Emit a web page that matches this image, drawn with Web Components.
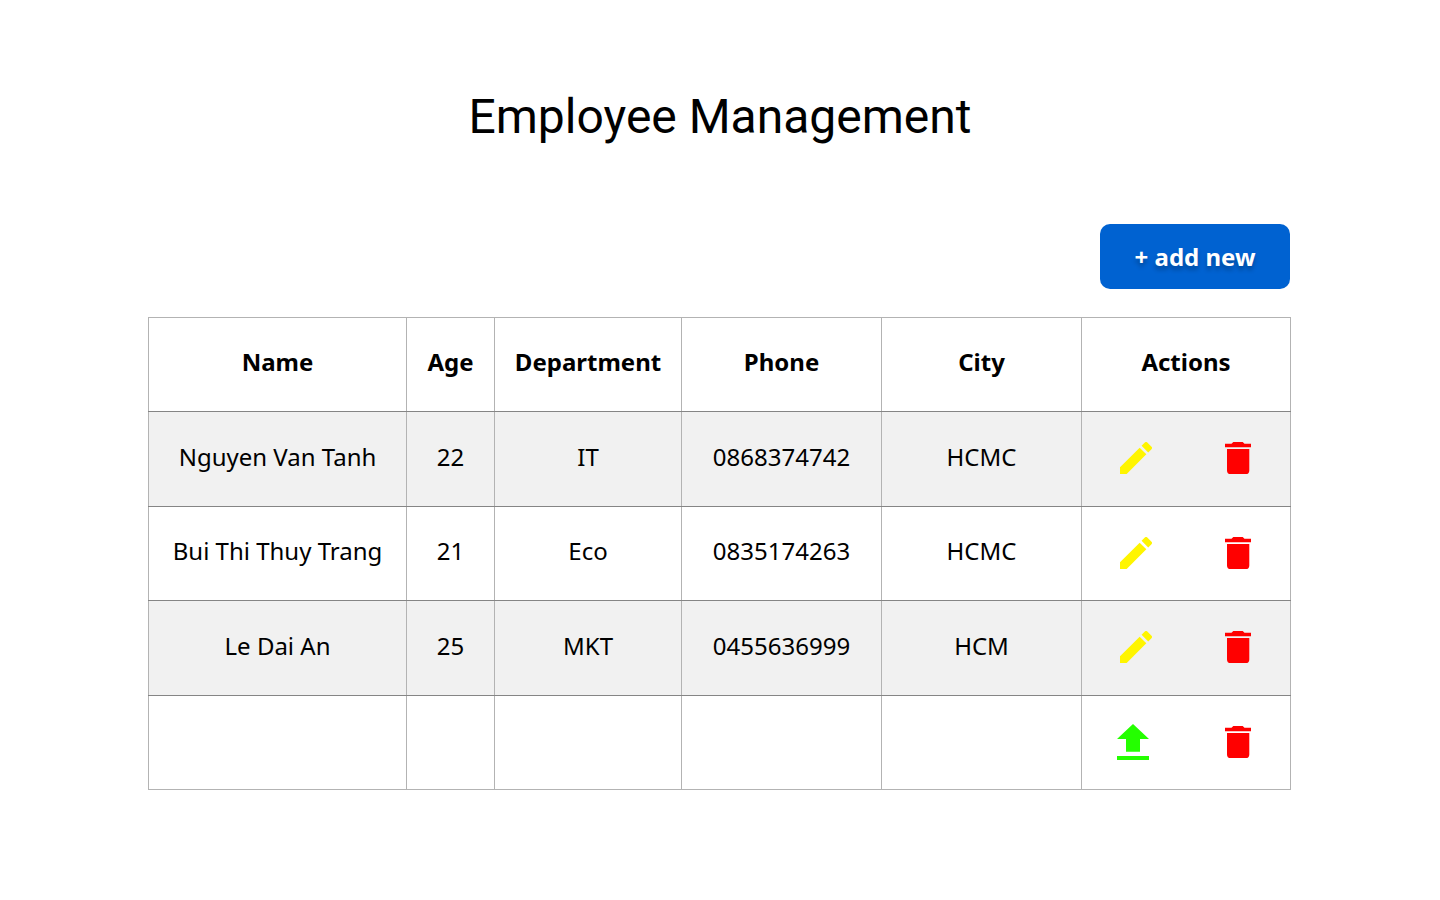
<!DOCTYPE html>
<html lang="en">
<head>
<meta charset="utf-8">
<meta name="viewport" content="width=device-width, initial-scale=1">
<title>Employee Management</title>
<style>
  body { margin: 0; background: #fff; color: #000; font: 24px/32px "Noto Sans", "Open Sans", sans-serif; }
</style>
</head>
<body>
<employee-page>
  <span slot="title">Employee Management</span>
  <add-button slot="toolbar">+ add new</add-button>
  <employee-table></employee-table>
</employee-page>

<script>
class EmployeePage extends HTMLElement {
  constructor() {
    super();
    this.attachShadow({ mode: "open" }).innerHTML = `
      <style>
        :host { display: block; padding: 85px 0 84px; }
        h1 { margin: 0 0 75px; font: 400 48px/64px Roboto, sans-serif; text-align: center; }
        section { padding: 0 150px 0 148px; }
        header { display: flex; justify-content: flex-end; margin-bottom: 28px; }
      </style>
      <main>
        <h1><slot name="title"></slot></h1>
        <section>
          <header><slot name="toolbar"></slot></header>
          <slot></slot>
        </section>
      </main>`;
  }
}

class AddButton extends HTMLElement {
  constructor() {
    super();
    this.attachShadow({ mode: "open" }).innerHTML = `
      <style>
        :host { display: block; }
        button {
          min-width: 190px; height: 65px; padding: 0 16px; border: 0; border-radius: 10px;
          background: #0062d1; color: #fff; font: inherit; font-weight: 700;
          text-shadow: 0 4px 4px rgba(0, 0, 0, .25); cursor: pointer;
        }
      </style>
      <button type="button"><slot></slot></button>`;
  }
}

const ICONS = {
  edit: { color: "#fff500", w: 32, h: 32, box: "3 3 18 18",
    path: "M3 17.25V21h3.75L17.81 9.94l-3.75-3.75L3 17.25zM20.71 7.04a1 1 0 0 0 0-1.41l-2.34-2.34a1 1 0 0 0-1.41 0l-1.83 1.83 3.75 3.75 1.83-1.83z" },
  remove: { color: "#ff0000", w: 26, h: 32, box: "0 0 26 32",
    path: "M0 1.700h6.500L8.300 0h9.400l1.800 1.700H26v3.600H0zM2 7h22.300v21.400a3.600 3.600 0 0 1-3.600 3.600H5.600A3.600 3.600 0 0 1 2 28.400z" },
  upload: { color: "#24ff00", w: 38, h: 36, box: "0 0 38 36",
    path: "M16 0l16 15h-9v12.700H9V15H0zM0 32h32v4H0z" }
};

class IconButton extends HTMLElement {
  constructor() {
    super();
    this.attachShadow({ mode: "open" });
  }
  connectedCallback() {
    const icon = ICONS[this.getAttribute("icon")];
    this.shadowRoot.innerHTML = `
      <style>
        :host { display: block; }
        button {
          display: flex; align-items: center; justify-content: center;
          width: 32px; height: 36px; padding: 0; border: 0; background: none;
          color: ${icon.color}; cursor: pointer;
        }
        svg { display: block; flex: none; fill: currentColor; }
      </style>
      <button type="button" aria-label="${this.getAttribute("label")}">
        <svg width="${icon.w}" height="${icon.h}" viewBox="${icon.box}" aria-hidden="true"><path d="${icon.path}"/></svg>
      </button>`;
  }
}

class EmployeeTable extends HTMLElement {
  constructor() {
    super();
    const columns = [["Name", 258], ["Age", 88], ["Department", 187], ["Phone", 200], ["City", 200], ["Actions", 209]];
    const rows = [
      ["Nguyen Van Tanh", "22", "IT", "0868374742", "HCMC"],
      ["Bui Thi Thuy Trang", "21", "Eco", "0835174263", "HCMC"],
      ["Le Dai An", "25", "MKT", "0455636999", "HCM"],
      ["", "", "", "", ""]
    ];
    const actions = row => `
      <td><div class="actions">
        ${row[0] ? '<icon-button icon="edit" label="Edit"></icon-button>' : '<icon-button icon="upload" label="Save"></icon-button>'}
        <icon-button icon="remove" label="Delete"></icon-button>
      </div></td>`;
    this.attachShadow({ mode: "open" }).innerHTML = `
      <style>
        :host { display: block; }
        table { width: 100%; table-layout: fixed; border-collapse: collapse; }
        tr { height: 94px; }
        tbody tr:nth-child(odd) { height: 95px; background: #f1f1f1; }
        th, td {
          box-sizing: border-box; padding: 0 0 5px; text-align: center; vertical-align: middle;
          border: 1px solid #b3b3b3; border-bottom-color: #858585; white-space: nowrap;
        }
        th { font-weight: 700; }
        td:last-child { padding: 0 0 2px 2px; }
        tbody tr:last-child td { border-bottom-color: #b3b3b3; }
        .actions { display: flex; justify-content: center; gap: 70px; }
      </style>
      <table>
        <colgroup>${columns.map(c => `<col style="width:${c[1]}px">`).join("")}</colgroup>
        <thead><tr>${columns.map(c => `<th scope="col">${c[0]}</th>`).join("")}</tr></thead>
        <tbody>${rows.map(r => `<tr>${r.map(v => `<td>${v}</td>`).join("")}${actions(r)}</tr>`).join("")}</tbody>
      </table>`;
  }
}

customElements.define("icon-button", IconButton);
customElements.define("add-button", AddButton);
customElements.define("employee-table", EmployeeTable);
customElements.define("employee-page", EmployeePage);
</script>
</body>
</html>
